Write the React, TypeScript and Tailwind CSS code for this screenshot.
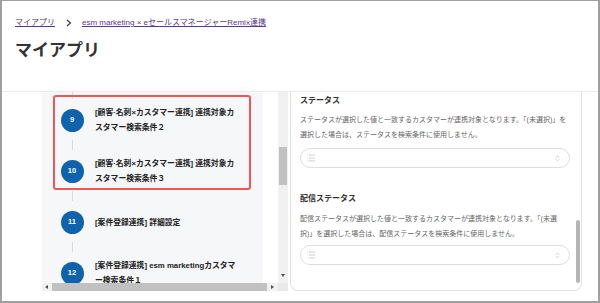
import { List, ChevronsUpDown } from 'lucide-react'

const font = "font-['Liberation_Sans','Noto_Sans_CJK_JP',sans-serif]"

function Connector({ h = 28, top = 8.5, len = 10 }: { h?: number; top?: number; len?: number }) {
  return (
    <div className="flex flex-col pl-[30px]" style={{ height: h, paddingTop: top }}>
      <div className="w-px bg-[#d9d9d9]" style={{ height: len }} />
    </div>
  )
}

function StepRow({ n, lines }: { n: number; lines: string[] }) {
  return (
    <div className="flex h-[23px] items-center">
      <div className="ml-[18.5px] flex h-[23px] w-[23px] shrink-0 items-center justify-center rounded-full bg-[#0f62ac] text-[7.5px] font-bold text-white">
        {n}
      </div>
      <div className="ml-[11.5px] whitespace-nowrap text-[7.8px] font-bold leading-[15px] text-[#222]">
        {lines.map((l) => (
          <div key={l}>{l}</div>
        ))}
      </div>
    </div>
  )
}

function SelectBox() {
  return (
    <div className="flex h-[20px] items-center rounded-full border border-[#dedede] bg-white pl-[5px] pr-[8px]">
      <List size={10} strokeWidth={1.5} className="text-[#b0b0b0]" />
      <div className="flex-1" />
      <ChevronsUpDown size={7} strokeWidth={1.5} className="text-[#999]" />
    </div>
  )
}

function Arrow({ dir }: { dir: 'down' | 'left' | 'right' }) {
  const pts = dir === 'down' ? '0,0 4,0 2,3' : dir === 'left' ? '3,0 3,4 0,2' : '0,0 0,4 3,2'
  return (
    <svg width="4" height="4" viewBox="0 0 4 4">
      <polygon points={pts} fill="#505050" />
    </svg>
  )
}

export default function App() {
  return (
    <div className={`${font} box-border flex h-[303px] w-[600px] flex-col overflow-hidden border-x-2 border-b-2 border-t border-[#a0a0a0] bg-white`}>
      {/* Header */}
      <div className="h-[91px] shrink-0 border-b border-[#ececec] pl-[13px] pt-[16px]">
        <div className="flex items-center text-[8px] leading-[11px]">
          <span className="text-[#55398f] underline">マイアプリ</span>
          <svg width="6" height="8" viewBox="0 0 6 8" className="ml-[11px] mr-[10px]">
            <polyline points="1,1 4.5,4 1,7" fill="none" stroke="#333" strokeWidth="1.1" />
          </svg>
          <span className="text-[#55398f] underline">esm marketing × eセールスマネージャーRemix連携</span>
        </div>
        <div className="mt-[11px] text-[17px] font-bold leading-[24px] text-[#333]">マイアプリ</div>
      </div>

      {/* Body */}
      <div className="flex flex-1">
        <div className="w-[40px] shrink-0" />

        {/* Left: steps scroll area */}
        <div className="flex h-[199px] w-[246px] shrink-0 flex-col">
          <div className="flex h-[191px]">
            <div className="w-[236px] overflow-hidden bg-white">
              <div className="h-full w-[221px] bg-[#f6f7f9]">
                <Connector h={16.5} top={0} len={7} />
                <div className="relative">
                  <StepRow n={9} lines={['[顧客·名刺×カスタマー連携] 連携対象カ', 'スタマー検索条件２']} />
                  <Connector />
                  <StepRow n={10} lines={['[顧客·名刺×カスタマー連携] 連携対象カ', 'スタマー検索条件３']} />
                  <div className="absolute -top-[13.5px] -bottom-[7.5px] left-[11px] right-[12px] rounded-[3px] border-2 border-[#f25555]" />
                </div>
                <Connector />
                <StepRow n={11} lines={['[案件登録連携] 詳細設定']} />
                <Connector />
                <StepRow n={12} lines={['[案件登録連携] esm marketingカスタマ', 'ー検索条件１']} />
              </div>
            </div>
            <div className="flex w-[10px] flex-col items-center bg-[#f1f1f1]">
              <div className="h-[55px]" />
              <div className="h-[38px] w-[8px] bg-[#c1c1c1]" />
              <div className="flex-1" />
              <div className="mb-[5px]">
                <Arrow dir="down" />
              </div>
            </div>
          </div>
          <div className="flex h-[8px] items-center bg-[#f1f1f1]">
            <div className="flex w-[10px] justify-center">
              <Arrow dir="left" />
            </div>
            <div className="h-[8px] w-[215px] bg-[#c1c1c1]" />
            <div className="flex w-[11px] justify-center">
              <Arrow dir="right" />
            </div>
            <div className="h-full flex-1 bg-[#e9e9e9]" />
          </div>
        </div>

        <div className="w-[2px] shrink-0" />

        {/* Right: settings card */}
        <div className="relative h-[199px] w-[292px] shrink-0 rounded-b-[8px] border-x border-b border-[#e3e3e3] pl-[9px] pr-[11px]">
          <div className="pt-[0.5px] text-[8px] font-bold leading-[15px] text-[#333]">ステータス</div>
          <div className="mt-[4px] whitespace-nowrap text-[7px] leading-[15px] text-[#666]">
            <div>ステータスが選択した値と一致するカスタマーが連携対象となります。「(未選択)」を</div>
            <div>選択した場合は、ステータスを検索条件に使用しません。</div>
          </div>
          <div className="mt-[6.5px]">
            <SelectBox />
          </div>

          <div className="mt-[22.5px] text-[8px] font-bold leading-[15px] text-[#333]">配信ステータス</div>
          <div className="mt-[5px] whitespace-nowrap text-[7px] leading-[15px] text-[#666]">
            <div>配信ステータスが選択した値と一致するカスタマーが連携対象となります。「(未選</div>
            <div>択)」を選択した場合は、配信ステータスを検索条件に使用しません。</div>
          </div>
          <div className="mt-[4.5px]">
            <SelectBox />
          </div>

          <div className="absolute right-[1px] top-[128px] h-[63px] w-[4px] rounded-full bg-[#b5b5b5]" />
        </div>

        <div className="flex-1" />
      </div>
    </div>
  )
}
